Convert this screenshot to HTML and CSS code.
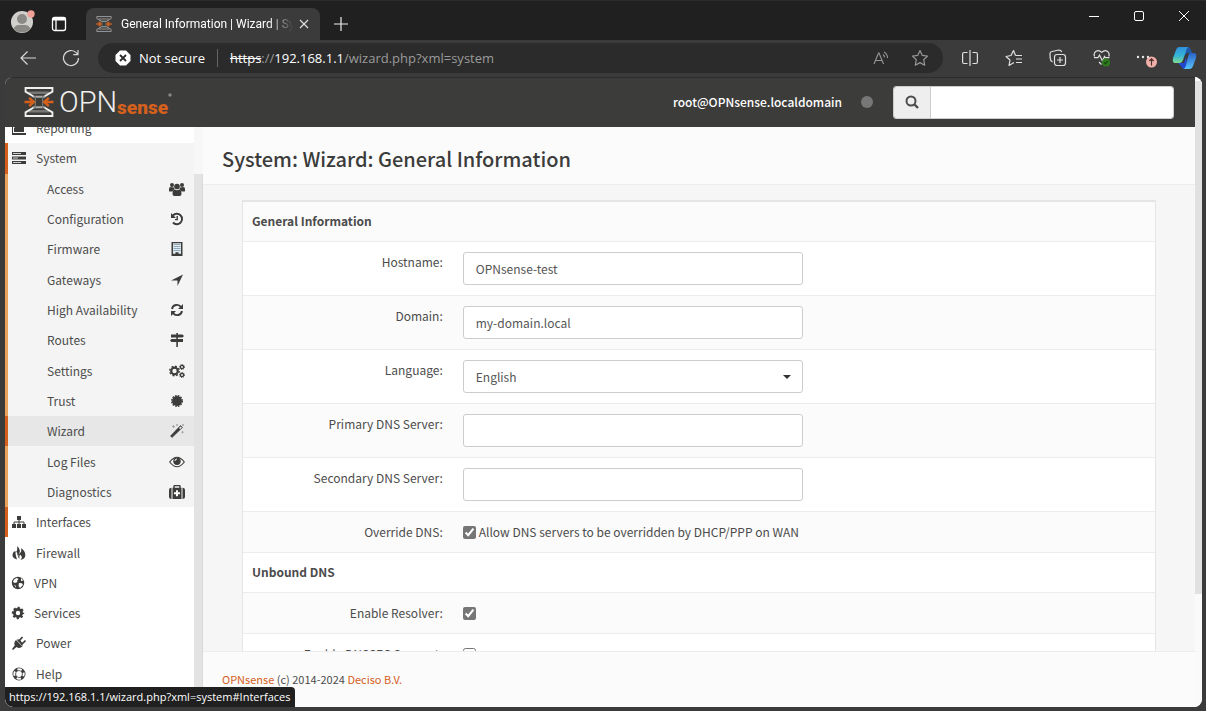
FILE: index.html
```html
<!DOCTYPE html>
<html lang="en">
<head>
<meta charset="utf-8">
<title>General Information | Wizard | System</title>
<link rel="stylesheet" href="styles.css">
</head>
<body>
<svg class="defs" width="0" height="0" aria-hidden="true">
  <symbol id="mark" viewBox="0 0 28 29">
    <path d="M4 5.500h20M4 23.500h20" stroke="#777775" stroke-width="2.500"/>
    <path d="M8 9.500h12M8 19.500h12" stroke="#a8a8a6" stroke-width="2"/>
    <path d="M10.500 9v11M17.500 9v11" stroke="#777775" stroke-width="1.200"/>
    <path d="M8.500 9L1 4.500V1h26v3.500L19.500 9M8.500 20L1 24.500V28h26v-3.500L19.500 20" fill="none" stroke="currentColor" stroke-width="1.800"/>
    <path d="M0 14.500h8M4.500 10.500l4.500 4-4.500 4M28 14.500h-8M23.500 10.500l-4.500 4 4.500 4" fill="none" stroke="#d4601c" stroke-width="2.400"/>
  </symbol>
</svg>
<div class="browser">
  <header class="tabstrip">
    <button class="profile" aria-label="Profile"><svg width="26" height="26" viewBox="0 0 26 26"><circle cx="12" cy="14" r="11" fill="#d0cfcb"/><circle cx="12" cy="11" r="5" fill="#8b8985"/><path d="M3.500 20.500q2-3.500 5-3.500h7q3 0 5 3.500a11 11 0 0 1-17 0z" fill="#8b8985"/><circle cx="21" cy="6" r="3.700" fill="#f0a096"/></svg></button>
    <button class="workspaces" aria-label="Tab actions"><svg width="16" height="16" viewBox="0 0 16 16" fill="none" stroke="#fff" stroke-width="1.300"><rect x="1.500" y="1.500" width="13" height="13" rx="2"/><path d="M1.500 3h13" stroke-width="3"/><path d="M5 4v10"/></svg></button>
    <div class="tab">
      <svg class="favicon" width="16" height="16"><use href="#mark"/></svg>
      <span class="tab-title">General Information | Wizard | System</span>
      <button aria-label="Close tab"><svg width="10" height="10" viewBox="0 0 10 10" stroke="#ddd" stroke-width="1.200"><path d="M1 1l8 8M9 1l-8 8"/></svg></button>
    </div>
    <button class="newtab" aria-label="New tab"><svg width="14" height="14" viewBox="0 0 14 14" stroke="#eee" stroke-width="1.200"><path d="M7 0v14M0 7h14"/></svg></button>
    <div class="winctl">
      <button aria-label="Minimize"><svg width="10" height="10" viewBox="0 0 10 10" stroke="#fff"><path d="M0 5.500h10"/></svg></button>
      <button aria-label="Maximize"><svg width="10" height="10" viewBox="0 0 10 10" stroke="#fff" fill="none"><rect x=".5" y=".5" width="9" height="9" rx="1.500"/></svg></button>
      <button aria-label="Close"><svg width="10" height="10" viewBox="0 0 10 10" stroke="#fff"><path d="M0 0l10 10M10 0L0 10"/></svg></button>
    </div>
  </header>

  <div class="toolbar">
    <button class="tool" aria-label="Back"><svg width="16" height="16" viewBox="0 0 16 16" fill="none" stroke="#d8d8d8" stroke-width="1.200"><path d="M16 8H1M7.500 1.500L1 8l6.500 6.500"/></svg></button>
    <button class="tool" aria-label="Refresh"><svg width="18" height="18" viewBox="0 0 18 18" fill="none" stroke="#d8d8d8" stroke-width="1.200"><path d="M16.500 9a7.500 7.500 0 1 1-2-5.100l1.500 1.600M16 1v4.700h-4.700"/></svg></button>
    <div class="address">
      <svg width="16" height="16" viewBox="0 0 16 16"><path d="M5 .5h6L15.500 5v6L11 15.500H5L.5 11V5z" fill="#fff"/><path d="M5 5l6 6M11 5l-6 6" stroke="#2b2b2b" stroke-width="1.800"/></svg>
      <span class="secure">Not secure</span>
      <span class="url"><s>https</s>://<b>192.168.1.1</b>/wizard.php?xml=system</span>
      <button class="slot" aria-label="Read aloud"><svg width="16" height="14" viewBox="0 0 16 14" fill="none" stroke="#979797" stroke-width="1.100"><path d="M1 13L5.500 2h.5l4.500 11M2.500 9.500h6M10 3.500q1.500 1.200 1.500 3M11 1q3.500 2 3.500 6"/></svg></button>
      <button class="slot" aria-label="Add to favorites"><svg width="18" height="18" viewBox="0 0 18 18" fill="none" stroke="#979797" stroke-width="1.200"><path d="M9 1.500l2.300 4.900 5.200.7-3.800 3.700 1 5.400L9 13.600l-4.700 2.600 1-5.400L1.500 7.100l5.200-.7z" stroke-linejoin="round"/></svg></button>
    </div>
    <button class="tool2" aria-label="Split screen"><svg width="16" height="16" viewBox="0 0 16 16" fill="none" stroke="#e0e0e0" stroke-width="1.200"><path d="M5.500 2.500H2Q.6 2.500.6 4v8q0 1.500 1.400 1.500h3.500M10.500 2.500H14q1.400 0 1.400 1.500v8q0 1.500-1.400 1.500h-3.500M8 0v16"/></svg></button>
    <button class="tool2" aria-label="Favorites"><svg width="18" height="18" viewBox="0 0 18 18" fill="none" stroke="#e0e0e0" stroke-width="1.200" stroke-linejoin="round"><path d="M10.500 6.500L8.500 1.500 6 6.500 1 7.500l4 3.500-1 5.500 5-3M10.500 6.500H17M11 10h6M11 13.500h6"/></svg></button>
    <button class="tool2" aria-label="Collections"><svg width="18" height="18" viewBox="0 0 18 18" fill="none" stroke="#e0e0e0" stroke-width="1.200"><rect x="5.500" y="5.500" width="11" height="11" rx="2.500"/><path d="M11 8v6M8 11h6M3.500 13Q1.200 11.500 1.200 9L1 4.500Q1 2.800 3 2.500l7-1.500q2 0 2.700 2"/></svg></button>
    <button class="tool2" aria-label="Browser essentials"><svg width="18" height="18" viewBox="0 0 18 18" fill="none" stroke="#e0e0e0" stroke-width="1.200"><path d="M8.500 15.500L6 13M1.500 7.500Q.3 4 3 2.200q3-1.600 5.700 1.200 2.800-2.800 5.600-1.200 2.700 1.800 1.500 5.300M1 8.700h4L6.500 6l3 6 2-4.500.8 1.200h4.200"/><circle cx="13" cy="13.500" r="4" fill="#2c7a1c" stroke="none"/><path d="M11.200 13.500l1.200 1.300 2.300-2.600" stroke="#173f10"/></svg></button>
    <button class="tool2" aria-label="Settings and more"><svg width="26" height="20" viewBox="0 0 26 20"><g fill="#e8e8e8"><circle cx="5" cy="9" r="1.200"/><circle cx="10" cy="9" r="1.200"/><circle cx="15" cy="9" r="1.200"/></g><circle cx="18.500" cy="14" r="5.500" fill="#f2b0aa"/><path d="M18.500 17.500v-6.500M16.300 13l2.200-2.200 2.200 2.200" fill="none" stroke="#4b2d2b" stroke-width="1.200"/></svg></button>
    <button class="copilot" aria-label="Copilot"><svg width="25" height="24" viewBox="0 0 25 24"><defs><linearGradient id="ga" x2="0" y2="1"><stop stop-color="#2f91df"/><stop offset=".55" stop-color="#36b5d5"/><stop offset="1" stop-color="#7fdc8f"/></linearGradient><linearGradient id="gb" x2="0" y2="1"><stop stop-color="#2a62c8"/><stop offset="1" stop-color="#58c2fa"/></linearGradient></defs><path d="M12 1h4q2 0 3 3l1 3h-5l-3 3z" fill="#1f58a7"/><path d="M6 17h6l2-6 1 7-2 5h-1q-2 0-3-3z" fill="#2248cf"/><path d="M7 1h10q-2 0-3 4l-3 9q-1 3-3 3H3q-3 0-2-5l3-8q1-3 3-3z" fill="url(#ga)"/><path d="M18 7h4q3 0 2 5l-3 8q-1 3-4 3h-6q2 0 3-4l2-8q1-4 2-4z" fill="url(#gb)"/></svg></button>
  </div>

  <div class="viewport">
    <div class="page">
      <header class="topbar">
        <a class="brand" href="#"><svg width="30" height="30"><use href="#mark"/></svg><span class="opn">OPN</span><span class="sense">sense</span><svg class="reg" width="4" height="4" viewBox="0 0 4 4"><circle cx="2" cy="2" r="1.700" fill="#888"/></svg></a>
        <span class="user">root@OPNsense.localdomain</span>
        <span class="dot"></span>
        <form class="search"><button type="button" aria-label="Search"><svg width="14" height="14" viewBox="0 0 14 14" fill="none" stroke="#4c4c4c" stroke-width="2"><circle cx="6" cy="6" r="4.500"/><path d="M9 9l4 4" stroke-width="2.400"/></svg></button><input type="text" aria-label="Search"></form>
      </header>
      <div class="body">
        <aside class="sidebar">
          <nav>
            <a href="#"><svg viewBox="0 0 14 14"><path d="M0 0h1v12h13v2H0zM2 11V7l3-3 3 2 4-4v9z"/></svg><span>Reporting</span></a>
            <a href="#" class="open"><svg viewBox="0 0 14 14"><path d="M0 1h14v3H0zM0 5.500h14v3H0zM0 10h14v3H0z"/><path d="M1 2.500h8M1 7h5M1 11.500h8" stroke="#f4f4f4" stroke-width=".8"/></svg><span>System</span></a>
            <a href="#" class="sub"><span>Access</span><svg viewBox="0 0 16 14"><circle cx="3" cy="3" r="2"/><circle cx="13" cy="3" r="2"/><circle cx="8" cy="4.500" r="2.800"/><path d="M0 9V7q0-2 1.500-2L5 5.500 5.500 7Q4 8 3.500 9.500H1Q0 9.500 0 9zM16 9V7q0-2-1.500-2L11 5.500 10.500 7q1.500 1 2 2.500H15q1 0 1-.5zM3.500 12q0-4.500 2.500-4.500 2 1.300 4 0 2.500 0 2.500 4.500 0 2-2 2h-5q-2 0-2-2z"/></svg></a>
            <a href="#" class="sub"><span>Configuration</span><svg viewBox="0 0 14 14"><path d="M3 3.500A5.200 5.200 0 1 1 3 10.500" fill="none" stroke="currentColor" stroke-width="1.900"/><path d="M1 1v5h5zM6.500 4h1.400v4.200H5V7h1.500z"/></svg></a>
            <a href="#" class="sub"><span>Firmware</span><svg viewBox="0 0 14 14"><path d="M1.500 0h11v14h-11z"/><path d="M3 1.200h8v10.500H8.500v-1.500h-3v1.500H3z" fill="#dfeaf2"/><path d="M3.500 2.500h7M3.500 4.500h7M3.500 6.500h7M3.500 8.500h7" stroke="#7f98a8" stroke-width=".8"/></svg></a>
            <a href="#" class="sub"><span>Gateways</span><svg viewBox="0 0 14 14"><path d="M13 1.500L7.500 13V7.500H1z"/></svg></a>
            <a href="#" class="sub"><span>High Availability</span><svg viewBox="0 0 14 14"><path d="M2 6a5 5 0 0 1 9-2M12 8a5 5 0 0 1-9 2" fill="none" stroke="currentColor" stroke-width="1.900"/><path d="M13 1v5H8zM1 13V8h5z"/></svg></a>
            <a href="#" class="sub"><span>Routes</span><svg viewBox="0 0 14 14"><path d="M6.300 0h1.600v14H6.300zM1 1.500h11.500L14 3l-1.500 1.500H1zM1.500 6H13v3H1.500L0 7.500z"/></svg></a>
            <a href="#" class="sub"><span>Settings</span><svg viewBox="0 0 16 14"><circle cx="5.500" cy="7" r="3.300" fill="none" stroke="currentColor" stroke-width="2.200"/><circle cx="5.500" cy="7" r="4.800" fill="none" stroke="currentColor" stroke-width="1.300" stroke-dasharray="1.900 1.870"/><g fill="none" stroke="currentColor"><circle cx="13" cy="3" r="1.600" stroke-width="1.300"/><circle cx="13" cy="11" r="1.600" stroke-width="1.300"/><circle cx="13" cy="3" r="2.500" stroke-dasharray="1 .96"/><circle cx="13" cy="11" r="2.500" stroke-dasharray="1 .96"/></g></svg></a>
            <a href="#" class="sub"><span>Trust</span><svg viewBox="0 0 14 14"><circle cx="7" cy="7" r="5"/><circle cx="7" cy="7" r="5.300" fill="none" stroke="currentColor" stroke-width="1.400" stroke-dasharray="1.700 1.080"/></svg></a>
            <a href="#" class="sub current"><span>Wizard</span><svg viewBox="0 0 14 14"><path d="M2 13.500L.5 12 10.500 1.500 12.500 3.500z" stroke="currentColor" stroke-width=".6"/><path d="M9 4l1.200 1.200L11.800 3.500l-1.200-1z" fill="#eee"/><path d="M3.500 1v3M2 2.500h3M7 0v2M6 1h2M12.500 7v2.500M11.300 8.200h2.500M13 0v2M12 1h2" stroke="#888" stroke-width=".6"/></svg></a>
            <a href="#" class="sub"><span>Log Files</span><svg viewBox="0 0 16 14"><path d="M.7 7Q8-2.500 15.300 7 8 16.500.7 7z" fill="none" stroke="currentColor" stroke-width="1.200"/><circle cx="8" cy="6.300" r="3.700"/><path d="M6 6q0-2 2-2" stroke="#f4f4f4" fill="none"/></svg></a>
            <a href="#" class="sub"><span>Diagnostics</span><svg viewBox="0 0 16 14"><path d="M5 3V1.500Q5 .5 6 .5h4q1 0 1 1V3" fill="none" stroke="currentColor" stroke-width="1.400"/><path d="M3.500 2.700h9V14h-9zM2.500 2.700V14Q0 14 0 12V5q0-2.300 2.500-2.300zM13.500 2.700V14q2.500 0 2.500-2V5q0-2.300-2.500-2.300z"/><path d="M8 5.200v6M5 8.200h6" stroke="#fff" stroke-width="2"/></svg></a>
            <a href="#" class="hover"><svg viewBox="0 0 14 14"><path d="M5 1h4v4H5zM0 9h4v4H0zM5 9h4v4H5zM10 9h4v4h-4z"/><path d="M7 4v6M2 10V7h10v3" fill="none" stroke="currentColor"/></svg><span>Interfaces</span></a>
            <a href="#"><svg viewBox="0 0 14 14"><path d="M5 0q4 3 2.500 6.500-.5 2-2.500 3.500 1.500-3-1.500-5Q3 8 5 13.500-1 12 1 7q.5-1 1.500-2l1 2.500Q6 4 5 0zM9 2q4.500 3 4.300 7.500Q13 13 8.500 14q3-3-.5-5.500Q7 11 7.500 13q-3-3 .5-6 2-2 1-5z"/></svg><span>Firewall</span></a>
            <a href="#" class="tight"><svg viewBox="0 0 14 14"><circle cx="7" cy="7" r="6.200"/><path d="M3 3.500L5.500 2l2 .7L6 5l.5 1L4 7 2 6zM8 7l3 .2 1 1.800-3 3-1.500-2zM10 2l2.300 2.500L10 5zM3 8.500l2 1.500v1.500z" fill="#fff"/></svg><span>VPN</span></a>
            <a href="#" class="tight"><svg viewBox="0 0 14 14"><circle cx="7" cy="7" r="3.600" fill="none" stroke="currentColor" stroke-width="2.800"/><circle cx="7" cy="7" r="5.200" fill="none" stroke="currentColor" stroke-width="2" stroke-dasharray="2.200 1.880" stroke-dashoffset="1.100"/></svg><span>Services</span></a>
            <a href="#"><svg viewBox="0 0 14 14"><path d="M4 4l6.500 6.500Q7.500 13 4.500 11L1 14l-1-1 2.700-3.500Q1.500 6.500 4 4z"/><path d="M6.500 5.500L10.500 1M9.500 8.500L13.500 4.500" stroke="currentColor" stroke-width="1.700"/><path d="M4.500 3.500h3l3 3.500v3z"/></svg><span>Power</span></a>
            <a href="#"><svg viewBox="0 0 14 14"><circle cx="7" cy="7" r="4.700" fill="none" stroke="currentColor" stroke-width="3.600"/><circle cx="7" cy="7" r="4.700" fill="none" stroke="#fff" stroke-width="1.900" stroke-dasharray="4.400 2.980" stroke-dashoffset="2.200"/></svg><span>Help</span></a>
          </nav>
          <div class="side-scroll"><div></div></div>
        </aside>
        <main>
          <h1>System: Wizard: General Information</h1>
          <div class="content">
            <table>
              <tbody>
                <tr><th colspan="2">General Information</th></tr>
                <tr><td class="label"><label for="host">Hostname:</label></td><td><input class="field" id="host" type="text" value="OPNsense-test"></td></tr>
                <tr><td class="label"><label for="domain">Domain:</label></td><td><input class="field" id="domain" type="text" value="my-domain.local"></td></tr>
                <tr><td class="label"><label for="lang">Language:</label></td><td><div class="select"><select class="field" id="lang"><option>English</option></select><svg width="8" height="4" viewBox="0 0 8 4"><path d="M0 0h8L4 4z" fill="#333"/></svg></div></td></tr>
                <tr><td class="label"><label for="dns1">Primary DNS Server:</label></td><td><input class="field" id="dns1" type="text"></td></tr>
                <tr><td class="label"><label for="dns2">Secondary DNS Server:</label></td><td><input class="field" id="dns2" type="text"></td></tr>
                <tr><td class="label">Override DNS:</td><td><label class="check"><input type="checkbox" checked>Allow DNS servers to be overridden by DHCP/PPP on WAN</label></td></tr>
                <tr><th colspan="2">Unbound DNS</th></tr>
                <tr><td class="label"><label for="resolver">Enable Resolver:</label></td><td><div class="check"><input id="resolver" type="checkbox" checked></div></td></tr>
                <tr><td class="label"><label for="dnssec">Enable DNSSEC Support:</label></td><td><div class="check"><input id="dnssec" type="checkbox"></div></td></tr>
              </tbody>
            </table>
          </div>
          <footer><a href="#">OPNsense</a> (c) 2014-2024 <a href="#">Deciso B.V.</a></footer>
        </main>
      </div>
    </div>
    <div class="page-scroll"><div></div></div>
    <div class="status">https://192.168.1.1/wizard.php?xml=system#Interfaces</div>
  </div>
</div>
</body>
</html>
```
FILE: styles.css
```css
* { box-sizing: border-box; }
body { margin: 0; font: 12px/20px "Noto Sans CJK SC", sans-serif; color: #4c4c4c; }
button { border: 0; padding: 0; background: none; display: flex; align-items: center; justify-content: center; flex: none; }
a { text-decoration: none; color: inherit; }
svg { flex: none; }
.defs { position: absolute; }

.browser { height: 100vh; display: flex; flex-direction: column; overflow: hidden; background: #3b3b3b; }

.tabstrip { height: 40px; flex: none; display: flex; background: #202020; border-top: 1px solid #2b2b2b; padding-left: 10px; font: 12px/16px Roboto, sans-serif; color: #fff; }
.profile { width: 26px; height: 40px; }
.workspaces { width: 46px; height: 46px; }
.tab { width: 234px; margin: 7px 0 0 4px; padding: 0 6px 0 10px; display: flex; align-items: center; background: #3b3b3b; border-radius: 8px 8px 0 0; color: #fff; }
.favicon { color: #999; }
.tab-title { flex: 1; margin-left: 9px; white-space: nowrap; overflow: hidden; -webkit-mask-image: linear-gradient(to right, #000 148px, transparent 172px); mask-image: linear-gradient(to right, #000 148px, transparent 172px); }
.tab button { width: 20px; height: 20px; }
.newtab { width: 42px; height: 45px; }
.winctl { margin-left: auto; display: flex; }
.winctl button { width: 45px; height: 29px; }

.toolbar { height: 37px; flex: none; display: flex; align-items: center; padding: 0 6px 1px 6px; }
.tool { width: 43px; height: 30px; }
.tool2 { width: 44px; height: 30px; }
.copilot { width: 32px; height: 30px; }
.address { flex: 1; height: 30px; margin: 0 5px 0 6px; padding: 0 4px 0 17px; display: flex; align-items: center; background: #2b2b2b; border-radius: 15px; font: 13px/18px "Open Sans", sans-serif; color: #fff; }
.secure { margin-left: 8px; padding-right: 12px; border-right: 1px solid #666; }
.url { flex: 1; margin-left: 12px; color: #9a9a9a; }
.url s, .url b { color: #fff; font-weight: 400; }
.slot { width: 39px; height: 30px; }

.viewport { position: relative; flex: 1; min-height: 0; margin: 0 4px 4px 5px; display: flex; overflow: hidden; border-radius: 8px; background: #fff; }
.page { flex: 1; display: flex; flex-direction: column; min-width: 0; }
.topbar { height: 50px; flex: none; display: flex; align-items: center; padding: 0 21px 0 19px; background: #3c3c3b; box-shadow: inset 0 1px #2c2c2c; color: #fff; }
.brand { display: flex; align-items: center; margin-right: auto; color: #f0f0ee; font-family: Roboto, sans-serif; }
.opn { margin-left: 5px; font-size: 29px; line-height: 34px; font-weight: 300; }
.sense { font-size: 19px; line-height: 22px; font-weight: 900; color: #d4601c; align-self: flex-end; }
.reg { align-self: flex-start; margin-top: 8px; }
.user { font-weight: 500; }
.dot { width: 12px; height: 12px; margin: 0 20px 0 19px; border-radius: 50%; background: #777; }
.search { display: flex; width: 281px; height: 33px; border: 1px solid #ccc; border-radius: 3px; overflow: hidden; }
.search button { width: 37px; background: #eee; border-right: 1px solid #ccc; }
.search input { flex: 1; min-width: 0; border: 0; background: #fff; }

.body { flex: 1; min-height: 0; display: flex; }
.sidebar { width: 198px; flex: none; display: flex; overflow: hidden; }
nav { flex: 1; margin: -14px 0 18px; display: flex; flex-direction: column; }
nav a { flex: 1; min-height: 0; display: flex; align-items: center; gap: 10px; padding: 0 9px 0 4px; border-left: 3px solid transparent; }
nav svg { width: 14px; height: 14px; fill: #3c3c3b; color: #3c3c3b; }
nav .tight { gap: 9px; padding-left: 3px; }
nav .open { background: #f4f4f4; border-color: #d4601c; }
nav .sub { justify-content: space-between; padding-left: 39px; background: #f4f4f4; border-color: #e9a35b; }
nav .sub svg { width: 16px; }
nav .current { background: #e7e7e7; border-color: #d4601c; }
nav .hover { border-color: #d4601c; }
.side-scroll { width: 9px; background: #f7f7f7; padding-top: 47px; display: flex; }
.side-scroll div { flex: 1; background: #e3e3e3; border-right: 1px solid #dadada; }

main { flex: 1; min-width: 0; display: flex; flex-direction: column; background: #f6f6f6; }
h1 { flex: none; margin: 0; padding: 17px 19px 0; font-size: 20px; line-height: 30px; height: 58px; font-weight: 500; color: #3c3c3b; background: #fbfbfb; border-bottom: 1px solid #ececec; }
.content { flex: 1; min-height: 0; overflow: hidden; padding: 15px 39px 0 39px; }
table { width: 100%; border-collapse: separate; border-spacing: 0; border: 1px solid #e5e5e5; border-top-width: 2px; background: #fff; }
td, th { padding: 10px; text-align: left; vertical-align: top; border-bottom: 1px solid #ececec; }
th { padding: 9px; height: 40px; font-weight: 700; }
tr:nth-child(odd) { background: #fbfbfb; }
.label { width: 23%; text-align: right; }
.field { display: block; width: 340px; height: 33px; padding: 0 12px; border: 1px solid #ccc; border-radius: 3px; background: #fff; font: inherit; color: #555; appearance: none; }
.select { display: grid; width: 340px; align-items: center; }
.select > * { grid-area: 1 / 1; }
.select svg { justify-self: end; margin-right: 12px; pointer-events: none; }
.check { display: flex; height: 20px; align-items: center; gap: 3px; }
.check input { margin: 0; width: 13px; height: 13px; accent-color: #767676; }
footer { height: 56px; flex: none; padding: 17px 19px; border-top: 1px solid #ececec; background: #fbfbfb; font-size: 11px; }
footer a { color: #d4601c; }

.page-scroll { width: 7px; flex: none; padding-top: 4px; background: #fafafa; }
.page-scroll div { height: 82%; background: #e1e1e1; }
.status { position: absolute; left: 0; bottom: 0; height: 20px; padding: 0 5px 0 4px; background: #202020; border-radius: 0 4px 0 8px; color: #fff; font: 11px/20px "Open Sans", sans-serif; }
```
